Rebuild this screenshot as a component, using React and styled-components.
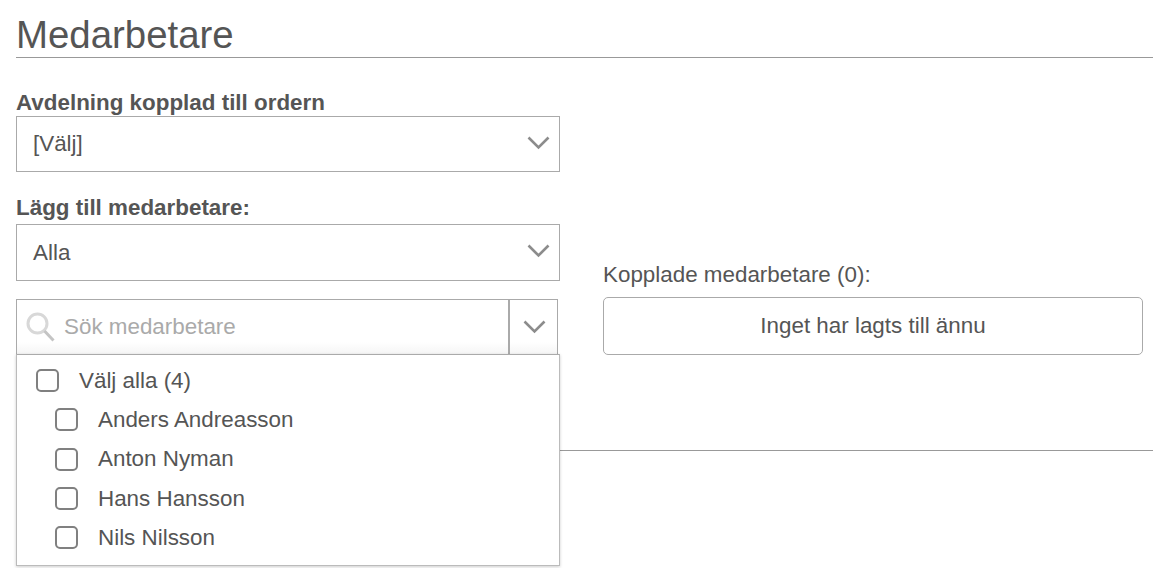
import styled, { createGlobalStyle } from "styled-components";

const employees = ["Anders Andreasson", "Anton Nyman", "Hans Hansson", "Nils Nilsson"];

const Chevron = () => (
    <ChevronIcon viewBox="0 0 23 14">
        <path d="M1.5 1.5 L11.5 11.5 L21.5 1.5" />
    </ChevronIcon>
);

const App = () => {
    return (
        <Page>
            <GlobalStyle />
            <Title>Medarbetare</Title>
            <Columns>
                <LeftColumn>
                    <Label>Avdelning kopplad till ordern</Label>
                    <Select>
                        <span>[Välj]</span>
                        <Chevron />
                    </Select>
                    <Label $top={23} $bottom={3}>Lägg till medarbetare:</Label>
                    <Select $height={57}>
                        <span>Alla</span>
                        <Chevron />
                    </Select>
                    <SearchWrap>
                        <SearchBox>
                            <SearchField>
                                <SearchIcon viewBox="0 0 29 30">
                                    <circle cx="11.5" cy="11.5" r="9.5" />
                                    <path d="M18.5 19 L27.5 28.5" />
                                </SearchIcon>
                                <Placeholder>Sök medarbetare</Placeholder>
                            </SearchField>
                            <SearchToggle>
                                <Chevron />
                            </SearchToggle>
                        </SearchBox>
                        <Dropdown>
                            <AllRow>
                                <CheckBox />
                                <span>Välj alla (4)</span>
                            </AllRow>
                            {employees.map((name) => (
                                <EmployeeRow key={name}>
                                    <CheckBox />
                                    <span>{name}</span>
                                </EmployeeRow>
                            ))}
                        </Dropdown>
                    </SearchWrap>
                </LeftColumn>
                <RightColumn>
                    <PlainLabel>Kopplade medarbetare (0):</PlainLabel>
                    <EmptyBox>Inget har lagts till ännu</EmptyBox>
                </RightColumn>
            </Columns>
            <Divider />
        </Page>
    );
};

const GlobalStyle = createGlobalStyle`
    html, body {
        margin: 0;
        background: #fff;
    }
    body {
        font-family: "Liberation Sans", Arial, sans-serif;
        color: #555;
    }
`;

const Page = styled.div`
    width: 1153px;
    height: 568px;
    padding: 12px 0 0 16px;
    box-sizing: border-box;
    overflow: hidden;
`;

const Title = styled.h1`
    margin: 0;
    height: 45px;
    font-size: 38.4px;
    line-height: 45px;
    font-weight: 400;
    color: #555;
    border-bottom: 1px solid #999;
`;

const Columns = styled.div`
    display: flex;
    align-items: flex-end;
    gap: 43px;
    margin-top: 32px;
`;

const LeftColumn = styled.div`
    width: 544px;
    padding-bottom: 1px;
    display: flex;
    flex-direction: column;
`;

const Label = styled.label`
    display: block;
    margin-top: ${(props) => props.$top || 0}px;
    margin-bottom: ${(props) => props.$bottom || 0}px;
    font-size: 22.4px;
    line-height: 26px;
    font-weight: 700;
    color: #555;
`;

const Select = styled.div`
    height: ${(props) => props.$height || 56}px;
    box-sizing: border-box;
    border: 1px solid #aaa;
    display: flex;
    align-items: center;
    justify-content: space-between;
    padding: 0 9px 0 16px;
    font-size: 22.4px;
    color: #555;

    svg {
        margin-bottom: 3px;
    }
`;

const ChevronIcon = styled.svg`
    width: 23px;
    height: 14px;
    flex-shrink: 0;
    fill: none;
    stroke: #8c8c8c;
    stroke-width: 2.6;
`;

const SearchWrap = styled.div`
    position: relative;
    margin-top: 18px;
`;

const SearchBox = styled.div`
    width: 542px;
    height: 55px;
    box-sizing: border-box;
    border: 1px solid #aaa;
    border-bottom: 0;
    background: linear-gradient(to bottom, #fff 78%, #f5f5f5);
    display: flex;
`;

const SearchField = styled.div`
    flex: 1;
    display: flex;
    align-items: center;
    gap: 9px;
    padding-left: 9px;
`;

const SearchIcon = styled.svg`
    width: 29px;
    height: 30px;
    fill: none;
    stroke: #d8d8d8;
    stroke-width: 3;

    path {
        stroke: #c4c4c4;
    }
`;

const Placeholder = styled.span`
    font-size: 22.4px;
    color: #aaa;
`;

const SearchToggle = styled.div`
    width: 45px;
    border-left: 2px solid #aaa;
    display: flex;
    align-items: center;
    justify-content: center;
    padding-left: 2px;
`;

const Dropdown = styled.div`
    position: absolute;
    top: 55px;
    left: 0;
    width: 544px;
    height: 212px;
    box-sizing: border-box;
    background: #fff;
    border: 1px solid #bbb;
    border-top-color: #aaa;
    box-shadow: 0 1px 3px rgba(0, 0, 0, 0.2);
    padding-top: 6px;
    z-index: 2;
`;

const AllRow = styled.div`
    display: flex;
    align-items: center;
    height: 39.3px;
    padding-left: 19px;
    gap: 20px;
    font-size: 22.4px;
    color: #555;
`;

const EmployeeRow = styled(AllRow)`
    padding-left: 38px;
`;

const CheckBox = styled.span`
    width: 23px;
    height: 23px;
    box-sizing: border-box;
    border: 2px solid #808080;
    border-radius: 5px;
    flex-shrink: 0;
`;

const RightColumn = styled.div`
    width: 540px;
    display: flex;
    flex-direction: column;
`;

const PlainLabel = styled.div`
    font-size: 22.4px;
    line-height: 26px;
    margin-bottom: 9px;
    color: #555;
`;

const EmptyBox = styled.div`
    height: 58px;
    box-sizing: border-box;
    border: 1px solid #aaa;
    border-radius: 5px;
    display: flex;
    align-items: center;
    justify-content: center;
    font-size: 22.4px;
    color: #555;
`;

const Divider = styled.hr`
    margin: 95px 0 0;
    border: 0;
    border-top: 1px solid #999;
`;

export default App;
